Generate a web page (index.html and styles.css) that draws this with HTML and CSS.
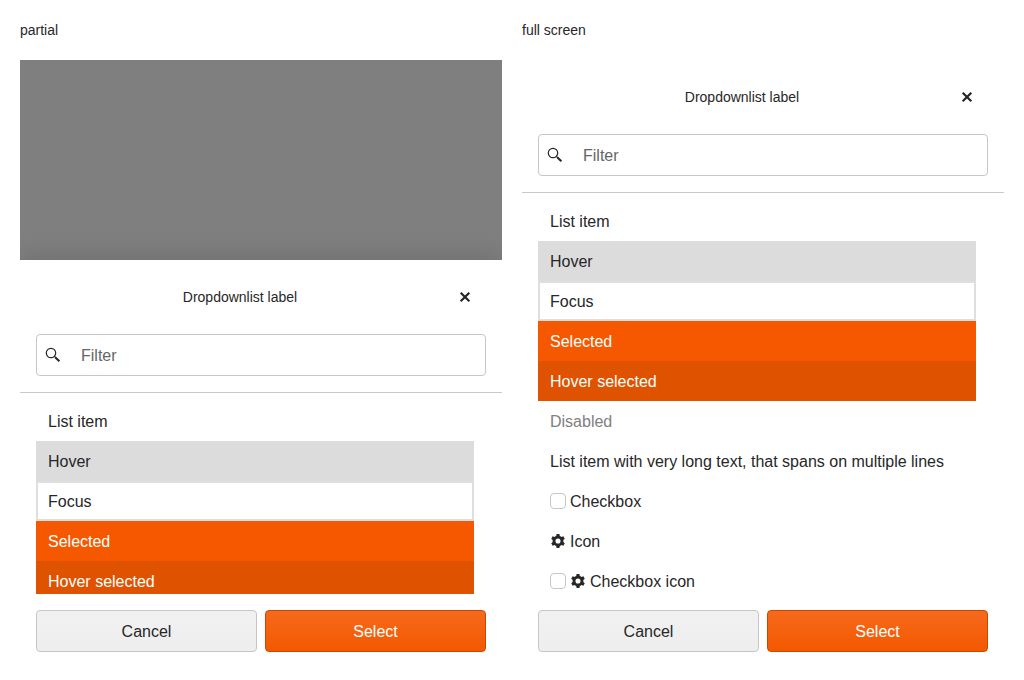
FILE: index.html
```html
<!DOCTYPE html>
<html lang="en">
<head>
<meta charset="utf-8">
<title>Dropdownlist</title>
<link rel="stylesheet" href="styles.css">
</head>
<body>
<svg class="symbols" width="0" height="0" aria-hidden="true">
  <symbol id="search" viewBox="0 0 16 16"><circle cx="6" cy="6" r="4.7" fill="none" stroke="currentColor" stroke-width="1.2"/><path d="M9.2 9.2 10.9 10.7" stroke="currentColor" stroke-width="1.2" fill="none"/><path d="M10.4 10.4 14.4 14.2" stroke="currentColor" stroke-width="2.1" fill="none"/></symbol>
  <symbol id="close" viewBox="0 0 16 16"><path d="M3.7 3.7 12.3 12.3M12.3 3.7 3.7 12.3" stroke="currentColor" stroke-width="2.2" fill="none"/></symbol>
  <symbol id="gear" viewBox="0 0 16 16">
    <circle cx="8" cy="8" r="4" fill="none" stroke="currentColor" stroke-width="2.9"/>
    <g fill="currentColor">
      <path id="teeth" d="M6.1 3.8 6.6 1H9.4L9.9 3.8ZM6.1 12.2 6.6 15H9.4L9.9 12.2Z"/>
      <use href="#teeth" transform="rotate(60 8 8)"/>
      <use href="#teeth" transform="rotate(120 8 8)"/>
    </g>
  </symbol>
</svg>
<main class="page">
  <section class="demo">
    <div class="caption">partial</div>
    <div class="screen">
      <div class="overlay"></div>
      <div class="sheet">
        <div class="header"><div class="title">Dropdownlist label</div><div class="close"><svg class="icon"><use href="#close"/></svg></div></div>
        <div class="filter"><div class="search"><svg class="icon"><use href="#search"/></svg><span class="placeholder">Filter</span></div></div>
        <div class="list">
          <div class="item">List item</div>
          <div class="item hover">Hover</div>
          <div class="item focus">Focus</div>
          <div class="item selected">Selected</div>
          <div class="item selected-hover">Hover selected</div>
        </div>
        <div class="actions"><div class="button">Cancel</div><div class="button primary">Select</div></div>
      </div>
    </div>
  </section>
  <section class="demo">
    <div class="caption">full screen</div>
    <div class="screen">
      <div class="sheet">
        <div class="header"><div class="title">Dropdownlist label</div><div class="close"><svg class="icon"><use href="#close"/></svg></div></div>
        <div class="filter"><div class="search"><svg class="icon"><use href="#search"/></svg><span class="placeholder">Filter</span></div></div>
        <div class="list">
          <div class="item">List item</div>
          <div class="item hover">Hover</div>
          <div class="item focus">Focus</div>
          <div class="item selected">Selected</div>
          <div class="item selected-hover">Hover selected</div>
          <div class="item disabled">Disabled</div>
          <div class="item">List item with very long text, that spans on multiple lines</div>
          <div class="item"><span class="checkbox"></span>Checkbox</div>
          <div class="item"><svg class="icon"><use href="#gear"/></svg>Icon</div>
          <div class="item"><span class="checkbox"></span><svg class="icon"><use href="#gear"/></svg>Checkbox icon</div>
        </div>
        <div class="actions"><div class="button">Cancel</div><div class="button primary">Select</div></div>
      </div>
    </div>
  </section>
</main>
</body>
</html>
```
FILE: styles.css
```css
* { box-sizing: border-box; }
body {
  margin: 0;
  background: #fff;
  color: #272727;
  font: 14px/20px "Liberation Sans", Arial, sans-serif;
}
.symbols { display: block; }
.page {
  display: grid;
  grid-template-columns: 482px 482px;
  gap: 20px;
  padding: 20px;
}
.caption { margin-bottom: 20px; }
.screen {
  display: flex;
  flex-direction: column;
  height: 600px;
  overflow: hidden;
}
.overlay { flex: 0 0 200px; background: #7f7f7f; }
.sheet {
  display: flex;
  flex: 1;
  flex-direction: column;
  min-height: 0;
  background: #fff;
}
.overlay + .sheet { box-shadow: 0 -5px 24px rgba(0, 0, 0, .12); }
.header { display: flex; align-items: center; height: 74px; padding: 0 16px; }
.title { flex: 1; text-align: center; }
.close { display: flex; justify-content: center; width: 42px; }
.icon { display: block; flex: none; width: 16px; height: 16px; }
.filter { padding-bottom: 16px; border-bottom: 1px solid #c9c9c9; }
.search {
  display: flex;
  align-items: center;
  height: 42px;
  margin: 0 16px;
  padding-left: 8px;
  border: 1px solid #c6c6c6;
  border-radius: 4px;
  font-size: 16px;
}
.placeholder { padding: 2px 0 0 20px; color: #666; }
.list { flex: 1; min-height: 0; margin-top: 8px; padding: 0 28px 0 16px; overflow: hidden; }
.item {
  display: flex;
  align-items: flex-start;
  gap: 4px;
  height: 40px;
  padding: 0 12px;
  font-size: 16px;
  line-height: 42px;
  white-space: nowrap;
}
.item .icon,
.checkbox { margin-top: 12px; }
.hover { background: #dcdcdc; }
.focus { box-shadow: inset 0 0 0 2px #dfdfdf; }
.selected { background: #f65800; color: #fff; }
.selected-hover { background: #df5200; color: #fff; }
.disabled { color: #808080; }
.checkbox {
  flex: none;
  width: 16px;
  height: 16px;
  border: 1px solid #c6c6c6;
  border-radius: 4px;
}
.actions { display: flex; gap: 8px; padding: 16px 16px 8px; }
.button {
  flex: 1;
  height: 42px;
  border: 1px solid #c6c6c6;
  border-radius: 4px;
  background: linear-gradient(#f1f1f1, #eee);
  font-size: 16px;
  line-height: 42px;
  text-align: center;
}
.primary {
  border-color: #c94800;
  background: linear-gradient(#f66a1c, #f45800);
  color: #fff;
}
```
